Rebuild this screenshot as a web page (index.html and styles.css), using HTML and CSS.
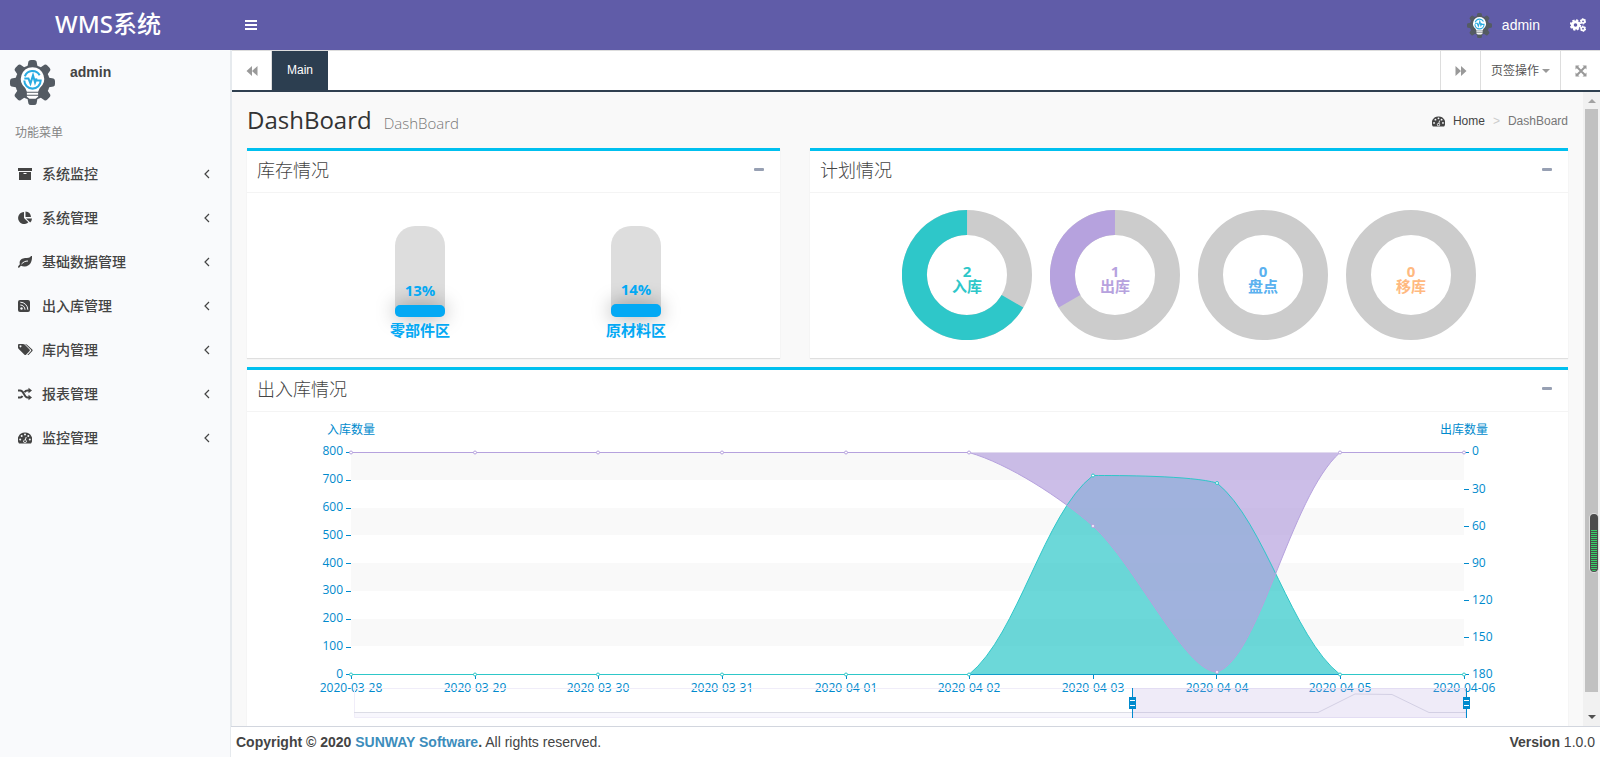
FILE: index.html
```html
<!DOCTYPE html>
<html lang="zh-CN">
<head>
	<meta charset="UTF-8">
	<title>WMS系统</title>
	<meta name="viewport" content="width=device-width"/>
	<link rel="stylesheet" href="styles.css">
</head>
<body>
	<!--图标库-->
	<svg class="sprite" aria-hidden="true">
		<symbol id="logo" viewBox="0 0 44 44">
			<g fill="#545b63">
				<circle cx="22" cy="22" r="17"/>
				<g id="teeth">
					<path d="M17 7L18 1.500Q18.500 0 20.500 0H23.500Q25.500 0 26 1.500L27 7ZM17 37L18 42.500Q18.500 44 20.500 44H23.500Q25.500 44 26 42.500L27 37Z"/>
					<path d="M7 17L1.500 18Q0 18.500 0 20.500V23.500Q0 25.500 1.500 26L7 27ZM37 17L42.500 18Q44 18.500 44 20.500V23.500Q44 25.500 42.500 26L37 27Z"/>
				</g>
				<use href="#teeth" transform="rotate(45 22 22)"/>
			</g>
			<path fill="#fff" d="M22 7A11.500 11.500 0 0 1 29 27.500L27.500 31V36L25 38H19L16.500 36V31L15 27.500A11.500 11.500 0 0 1 22 7Z"/>
			<path stroke="#545b63" d="M16 31.500H28M16 34.500H28"/>
			<path fill="none" stroke="#29abe2" stroke-width="2" d="M29 15A8 8 0 0 0 14.500 16M14 20A8 8 0 0 0 30 20H26M14 18H18L20 23L22.500 15L24.500 22L26 18"/>
		</symbol>
		<symbol id="i-archive" viewBox="0 0 14 14">
			<path fill-rule="evenodd" d="M0 1H14V4H0ZM1 5H13V13H1ZM5.500 6V7H8.500V6Z"/>
		</symbol>
		<symbol id="i-pie" viewBox="0 0 14 14">
			<path d="M6 1V7L10.300 11.300A6 6 0 1 1 6 1ZM7.500 0.500A6 6 0 0 1 13 6H7.500ZM8 7.500H14A6 6 0 0 1 12.200 11.500Z"/>
		</symbol>
		<symbol id="i-leaf" viewBox="0 0 14 14">
			<path d="M14 1C14.300 6 12.500 11 7 11.500C5.500 11.700 4 11.300 3 10.800C2 11.500 1.700 12.800 .8 12.800C.3 12.800 0 12.300 0 11.900C0 11 1.500 10 1.900 9.300C.6 5.500 4 3.200 7 3C9.500 2.900 12 3 13 1Z"/>
			<path class="cut" d="M3.500 9C5.500 7 7 6 10 6"/>
		</symbol>
		<symbol id="i-rss" viewBox="0 0 12 14">
			<rect x="0" y="1" width="12" height="12" rx="2"/>
			<circle class="hole" cx="3.500" cy="9.500" r="1.200"/>
			<path class="cut" d="M2.300 6A4.700 4.700 0 0 1 7 10.700M2.300 3.200A7.500 7.500 0 0 1 9.800 10.700"/>
		</symbol>
		<symbol id="i-tags" viewBox="0 0 15 14">
			<path fill-rule="evenodd" d="M0 2Q0 1 1 1H5Q6 1 6.600 1.600L11.600 6.600Q12.200 7.300 11.600 8L8 11.700Q7.300 12.300 6.500 11.700L.7 6Q0 5.400 0 4.800ZM2.500 2.300A1 1 0 1 0 2.510 2.300Z"/>
			<path d="M7 1Q8.200 1 9 1.700L14.300 6.600Q15 7.300 14.400 8L10.500 11.900Q10 12.300 9.300 11.900L13 8Q13.500 7.300 13 6.700Z"/>
		</symbol>
		<symbol id="i-random" viewBox="0 0 14 14">
			<path class="line" d="M0 3.500H2.200C6 3.500 6 10.500 9.500 10.500H11M0 10.500H2.200C3.200 10.500 4 9.800 4.500 9M6.500 5.200C7.300 4 8 3.500 9.500 3.500H11"/>
			<path d="M10.500 .8L14 3.500L10.500 6.200ZM10.500 7.800L14 10.500L10.500 13.200Z"/>
		</symbol>
		<symbol id="i-dash" viewBox="0 0 14 14">
			<path d="M7 1.500A7 7 0 0 1 13 12.500H1A7 7 0 0 1 7 1.500Z"/>
			<g class="hole">
				<circle cx="2.200" cy="8.500" r="1"/><circle cx="3.700" cy="5" r="1"/><circle cx="7" cy="3.600" r="1"/>
				<circle cx="10.300" cy="5" r="1"/><circle cx="11.800" cy="8.500" r="1"/><circle cx="7" cy="10.300" r="1.700"/>
			</g>
			<path class="cut" d="M7 10L8.200 6"/>
			<circle cx="7" cy="10.300" r="1"/>
		</symbol>
		<symbol id="i-cogs" viewBox="0 0 16 14">
			<circle class="ring" cx="5.500" cy="7" r="3.200"/>
			<circle class="teeth" cx="5.500" cy="7" r="4.800"/>
			<circle class="ring small" cx="13" cy="3.300" r="1.700"/>
			<circle class="teeth small" cx="13" cy="3.300" r="2.500"/>
			<circle class="ring small" cx="13" cy="10.700" r="1.700"/>
			<circle class="teeth small" cx="13" cy="10.700" r="2.500"/>
		</symbol>
		<symbol id="i-bars" viewBox="0 0 12 12">
			<path d="M0 1H12V3H0ZM0 5H12V7H0ZM0 9H12V11H0Z"/>
		</symbol>
		<symbol id="i-back" viewBox="0 0 12 12">
			<path d="M6 1V11L.5 6ZM11.500 1V11L6 6Z"/>
		</symbol>
		<symbol id="i-next" viewBox="0 0 12 12">
			<path d="M.5 1V11L6 6ZM6 1V11L11.500 6Z"/>
		</symbol>
		<symbol id="i-expand" viewBox="0 0 12 12">
			<path d="M.5 .5H4.500L.5 4.500ZM7.500 .5H11.500V4.500ZM11.500 7.500V11.500H7.500ZM4.500 11.500H.5V7.500Z"/>
			<path class="line" d="M2 2L10 10M10 2L2 10"/>
		</symbol>
		<symbol id="i-left" viewBox="0 0 6 10">
			<path fill="none" stroke="currentColor" stroke-width="1.200" d="M5 1L1 5L5 9"/>
		</symbol>
	</svg>

	<header class="main-header">
		<a class="logo" href="#">WMS系统</a>
		<nav class="navbar">
			<button class="toggle" aria-label="菜单"><svg width="12" height="12"><use href="#i-bars"/></svg></button>
			<a class="user" href="#"><svg width="25" height="25"><use href="#logo"/></svg>admin</a>
			<button class="setting" aria-label="设置"><svg width="16" height="14"><use href="#i-cogs"/></svg></button>
		</nav>
	</header>

	<div class="wrapper">
		<!--左侧菜单-->
		<aside class="sidebar">
			<div class="user-panel">
				<svg width="45" height="45"><use href="#logo"/></svg>
				<strong>admin</strong>
			</div>
			<div class="menu-title">功能菜单</div>
			<ul class="menu">
				<li><a href="#"><svg class="icon"><use href="#i-archive"/></svg><span>系统监控</span><svg class="arrow"><use href="#i-left"/></svg></a></li>
				<li><a href="#"><svg class="icon"><use href="#i-pie"/></svg><span>系统管理</span><svg class="arrow"><use href="#i-left"/></svg></a></li>
				<li><a href="#"><svg class="icon"><use href="#i-leaf"/></svg><span>基础数据管理</span><svg class="arrow"><use href="#i-left"/></svg></a></li>
				<li><a href="#"><svg class="icon rss"><use href="#i-rss"/></svg><span>出入库管理</span><svg class="arrow"><use href="#i-left"/></svg></a></li>
				<li><a href="#"><svg class="icon tags"><use href="#i-tags"/></svg><span>库内管理</span><svg class="arrow"><use href="#i-left"/></svg></a></li>
				<li><a href="#"><svg class="icon"><use href="#i-random"/></svg><span>报表管理</span><svg class="arrow"><use href="#i-left"/></svg></a></li>
				<li><a href="#"><svg class="icon"><use href="#i-dash"/></svg><span>监控管理</span><svg class="arrow"><use href="#i-left"/></svg></a></li>
			</ul>
		</aside>

		<div class="main">
			<!--页签-->
			<div class="tabs">
				<button class="tab-btn first" aria-label="向左"><svg width="12" height="12"><use href="#i-back"/></svg></button>
				<a class="tab active" href="#">Main</a>
				<button class="tab-btn push" aria-label="向右"><svg width="12" height="12"><use href="#i-next"/></svg></button>
				<button class="tab-btn wide">页签操作<i class="caret"></i></button>
				<button class="tab-btn" aria-label="全屏"><svg width="12" height="12"><use href="#i-expand"/></svg></button>
			</div>

			<div class="frame">
				<div class="content">
					<div class="content-header">
						<h1>DashBoard<small>DashBoard</small></h1>
						<nav class="breadcrumb">
							<svg width="13" height="13"><use href="#i-dash"/></svg>
							<a href="#">Home</a><i>&gt;</i><span>DashBoard</span>
						</nav>
					</div>

					<div class="row">
						<section class="box">
							<div class="box-header"><h3>库存情况</h3><button aria-label="折叠"></button></div>
							<div class="box-body tubes">
								<div class="tube">
									<div class="tube-bg"><span>13%</span><div class="tube-fill" style="height:13%"></div></div>
									<span>零部件区</span>
								</div>
								<div class="tube">
									<div class="tube-bg"><span>14%</span><div class="tube-fill" style="height:14%"></div></div>
									<span>原材料区</span>
								</div>
							</div>
						</section>
						<section class="box">
							<div class="box-header"><h3>计划情况</h3><button aria-label="折叠"></button></div>
							<div class="box-body rings">
								<svg class="donut c1" viewBox="0 0 130 130">
									<circle cx="65" cy="65" r="52.500"/>
									<circle class="part" cx="65" cy="65" r="52.500" pathLength="360" stroke-dasharray="240 120" transform="rotate(30 65 65)"/>
									<text y="67"><tspan x="65">2</tspan><tspan x="65" dy="15">入库</tspan></text>
								</svg>
								<svg class="donut c2" viewBox="0 0 130 130">
									<circle cx="65" cy="65" r="52.500"/>
									<circle class="part" cx="65" cy="65" r="52.500" pathLength="360" stroke-dasharray="120 240" transform="rotate(150 65 65)"/>
									<text y="67"><tspan x="65">1</tspan><tspan x="65" dy="15">出库</tspan></text>
								</svg>
								<svg class="donut c3" viewBox="0 0 130 130">
									<circle cx="65" cy="65" r="52.500"/>
									<text y="67"><tspan x="65">0</tspan><tspan x="65" dy="15">盘点</tspan></text>
								</svg>
								<svg class="donut c4" viewBox="0 0 130 130">
									<circle cx="65" cy="65" r="52.500"/>
									<text y="67"><tspan x="65">0</tspan><tspan x="65" dy="15">移库</tspan></text>
								</svg>
							</div>
						</section>
					</div>

					<section class="box">
						<div class="box-header"><h3>出入库情况</h3><button aria-label="折叠"></button></div>
						<!--出入库曲线-->
						<svg class="chart" viewBox="0 0 1321 340">
							<path fill="#f9f9f9" d="M104 40H1217V68H104ZM104 96H1217V123H104ZM104 151H1217V179H104ZM104 207H1217V234H104Z"/>
							<g class="mid">
								<text x="104" y="22">入库数量</text>
								<text x="1217" y="22">出库数量</text>
							</g>
							<g class="end">
								<text x="96" y="43">800</text><text x="96" y="71">700</text><text x="96" y="99">600</text>
								<text x="96" y="127">500</text><text x="96" y="155">400</text><text x="96" y="182">300</text>
								<text x="96" y="210">200</text><text x="96" y="238">100</text><text x="96" y="266">0</text>
							</g>
							<g>
								<text x="1225" y="43">0</text><text x="1225" y="81">30</text><text x="1225" y="118">60</text>
								<text x="1225" y="155">90</text><text x="1225" y="192">120</text><text x="1225" y="229">150</text>
								<text x="1225" y="266">180</text>
							</g>
							<g class="mid">
								<text x="104" y="280">2020-03-28</text><text x="228" y="280">2020-03-29</text>
								<text x="351" y="280">2020-03-30</text><text x="475" y="280">2020-03-31</text>
								<text x="599" y="280">2020-04-01</text><text x="722" y="280">2020-04-02</text>
								<text x="846" y="280">2020-04-03</text><text x="970" y="280">2020-04-04</text>
								<text x="1093" y="280">2020-04-05</text><text x="1217" y="280">2020-04-06</text>
							</g>
							<path class="axis" d="M99 40.500h5M99 68.500h5M99 96.500h5M99 123.500h5M99 151.500h5M99 179.500h5M99 207.500h5M99 235.500h5M99 262.500H1222M1217 40.500h5M1217 77.500h5M1217 114.500h5M1217 151.500h5M1217 188.500h5M1217 225.500h5M104.500 262v5M228.500 262v5M351.500 262v5M475.500 262v5M599.500 262v5M722.500 262v5M846.500 262v5M969.500 262v5M1093.500 262v5M1217.500 262v5"/>
							<path fill="#2ec7c9" opacity=".7" d="M722 262.500C771 223 797 101 846 63.500C872 63.500 944 63.500 970 71C1018 110 1045 225 1093 262.500Z"/>
							<path fill="#b6a2de" opacity=".7" d="M722 40.500C762 52 814 86 846 114C888 152 938 260 970 260C1012 247 1043 85 1093 40.500Z"/>
							<path class="s1" d="M104 262.500H722C771 223 797 101 846 63.500C872 63.500 944 63.500 970 71C1018 110 1045 225 1093 262.500H1217"/>
							<path class="s2" d="M104 40.500H722C762 52 814 86 846 114C888 152 938 260 970 260C1012 247 1043 85 1093 40.500H1217"/>
							<g class="dot1">
								<circle cx="104" cy="262.500" r="1.500"/><circle cx="228" cy="262.500" r="1.500"/><circle cx="351" cy="262.500" r="1.500"/>
								<circle cx="475" cy="262.500" r="1.500"/><circle cx="599" cy="262.500" r="1.500"/><circle cx="722" cy="262.500" r="1.500"/>
								<circle cx="846" cy="63.500" r="1.500"/><circle cx="970" cy="71" r="1.500"/><circle cx="1093" cy="262.500" r="1.500"/>
								<circle cx="1217" cy="262.500" r="1.500"/>
							</g>
							<g class="dot2">
								<circle cx="104" cy="40.500" r="1.500"/><circle cx="228" cy="40.500" r="1.500"/><circle cx="351" cy="40.500" r="1.500"/>
								<circle cx="475" cy="40.500" r="1.500"/><circle cx="599" cy="40.500" r="1.500"/><circle cx="722" cy="40.500" r="1.500"/>
								<circle cx="846" cy="114" r="1.500"/><circle cx="970" cy="260" r="1.500"/><circle cx="1093" cy="40.500" r="1.500"/>
								<circle cx="1217" cy="40.500" r="1.500"/>
							</g>
							<!--缩放条-->
							<path fill="#f8f7fd" d="M107 300H885V305H107Z"/>
							<path fill="none" stroke="#f0edf9" d="M107.500 276.500H1219V305.500H107.500Z"/>
							<path fill="none" stroke="#dcdde6" d="M107 300.500H1071L1108 282L1145 282.500L1182 300.500H1219"/>
							<path fill="#b6a2de" opacity=".22" d="M885 276H1219V306H885Z"/>
							<path fill="#008acd" d="M885 276h1v30h-1ZM882 285h7v12h-7ZM1219 276h1v30h-1ZM1216 285h7v12h-7Z"/>
							<path stroke="#fff" d="M883 288.500h5M883 293.500h5M1217 288.500h5M1217 293.500h5"/>
						</svg>
					</section>
				</div>
				<!--滚动条-->
				<div class="scrollbar">
					<i class="up"></i>
					<div class="thumb"></div>
					<i class="down"></i>
				</div>
				<div class="gauge"></div>
			</div>

			<footer class="footer">
				<div><strong>Copyright © 2020 <a href="#">SUNWAY Software</a>.</strong> All rights reserved.</div>
				<div><b>Version</b> 1.0.0</div>
			</footer>
		</div>
	</div>
</body>
</html>
```
FILE: styles.css
```css
*{
	box-sizing:border-box;
}
body{
	margin:0;
	height:100vh;
	display:flex;
	flex-direction:column;
	overflow:hidden;
	font:14px/20px "Liberation Sans","Noto Sans CJK SC",sans-serif;
	color:#333;
	background:#f9fafc;
}
a{
	color:inherit;
	text-decoration:none;
}
button{
	border:0;
	padding:0;
	background:none;
	color:inherit;
	font:inherit;
}
i{
	font-style:normal;
}
svg{
	fill:currentColor;
	flex:none;
}
.sprite{
	display:none;
}
/*图标*/
.hole{
	fill:#f9fafc;
}
.cut{
	fill:none;
	stroke:#f9fafc;
}
.line{
	fill:none;
	stroke:currentColor;
	stroke-width:2;
}
.ring{
	fill:none;
	stroke:currentColor;
	stroke-width:2.8;
}
.teeth{
	fill:none;
	stroke:currentColor;
	stroke-width:1.8;
	stroke-dasharray:2.2 1.57;
}
.ring.small{
	stroke-width:1.6;
}
.teeth.small{
	stroke-width:1.2;
	stroke-dasharray:1.5 1.1;
}
/*顶部*/
.main-header{
	display:flex;
	height:50px;
	flex:none;
	background:#605ca8;
	color:#fff;
}
.logo{
	width:230px;
	padding-right:14px;
	line-height:48px;
	text-align:center;
	font-size:24px;
	font-weight:500;
	font-family:"Noto Sans","Noto Sans CJK SC",sans-serif;
}
.navbar{
	flex:1;
	display:flex;
	align-items:center;
	padding:0 14px 0 15px;
}
.toggle{
	display:flex;
}
.user{
	display:flex;
	align-items:center;
	gap:10px;
	margin-left:auto;
}
.setting{
	display:flex;
	margin-left:30px;
}
.wrapper{
	display:flex;
	flex:1;
	min-height:0;
}
/*左侧*/
.sidebar{
	width:232px;
	flex:none;
	border-right:2px solid #e6eaee;
	color:#444;
}
.user-panel{
	display:flex;
	gap:15px;
	padding:10px;
}
.user-panel strong{
	padding-top:2px;
}
.menu-title{
	padding:8px 15px 9px;
	font-size:12px;
	color:#848484;
}
.menu{
	margin:0;
	padding:0;
	list-style:none;
}
.menu a{
	display:flex;
	align-items:center;
	height:44px;
	padding:0 20px 0 18px;
	font-weight:500;
}
.menu .icon{
	width:14px;
	height:14px;
	margin-right:10px;
}
.menu .rss{
	width:12px;
	margin-right:12px;
}
.menu .tags{
	width:15px;
	margin-right:9px;
}
.menu .arrow{
	width:6px;
	height:10px;
	margin-left:auto;
}
.main{
	flex:1;
	min-width:0;
	display:flex;
	flex-direction:column;
}
/*页签*/
.tabs{
	display:flex;
	height:42px;
	flex:none;
	border-top:1px solid #ddd;
	border-bottom:2px solid #2f4050;
	background:#fff;
	font-size:12px;
}
.tab-btn{
	width:40px;
	display:flex;
	align-items:center;
	justify-content:center;
	border-left:1px solid #ddd;
	color:#999;
}
.tab-btn.first{
	border-left:0;
	border-right:1px solid #ddd;
}
.tab-btn.push{
	margin-left:auto;
}
.tab-btn.wide{
	width:80px;
	color:#555;
}
.caret{
	margin-left:3px;
	border:4px solid transparent;
	border-top-color:#999;
	border-bottom:0;
}
.tab{
	padding:0 15px;
	line-height:38px;
}
.tab.active{
	background:#2c3e50;
	color:#fff;
}
/*内容*/
.frame{
	position:relative;
	flex:1;
	min-height:0;
	display:flex;
	background:#f9f9f9;
}
.content{
	flex:1;
	min-width:0;
	overflow:hidden;
	padding:0 15px;
}
.content-header{
	display:flex;
	justify-content:space-between;
	align-items:center;
	height:56px;
	padding-top:2px;
}
h1{
	margin:0;
	font:24px/32px "Open Sans",sans-serif;
}
h1 small{
	margin-left:12px;
	font-size:15px;
	font-weight:300;
	color:#777;
}
.breadcrumb{
	display:flex;
	align-items:center;
	font-size:12px;
	color:#777;
}
.breadcrumb svg,
.breadcrumb a{
	color:#444;
}
.breadcrumb a{
	margin-left:8px;
}
.breadcrumb i{
	margin:0 8px;
	color:#ccc;
}
.row{
	display:grid;
	grid-template-columns:533fr 758fr;
	gap:30px;
}
.box{
	margin-bottom:9px;
	border-top:3px solid #00c0ef;
	background:#fff;
	box-shadow:0 1px 1px rgba(0,0,0,.1);
}
.box-header{
	display:flex;
	justify-content:space-between;
	align-items:center;
	height:42px;
	padding:0 16px 2px 10px;
	border-bottom:1px solid #f4f4f4;
}
.box-header h3{
	margin:0;
	font-size:18px;
	font-weight:300;
	color:#444;
}
.box-header button{
	width:10px;
	height:3px;
	margin-bottom:2px;
	border-radius:1px;
	background:#97a0b3;
}
.box-body{
	height:165px;
}
/*库存*/
.tubes{
	display:grid;
	grid-template-columns:1fr 1fr;
	padding:33px 36px 0 65px;
}
.tube{
	display:flex;
	flex-direction:column;
	align-items:center;
	gap:3px;
	color:#03a9f4;
	font:bold 15px/20px "Open Sans","Noto Sans CJK SC",sans-serif;
}
.tube-bg{
	display:flex;
	flex-direction:column;
	justify-content:flex-end;
	width:50px;
	height:91px;
	border-radius:20px 20px 5px 5px;
	background:#ddd;
	text-align:center;
}
.tube-bg span{
	position:relative;
	z-index:1;
	padding-bottom:5px;
}
.tube-fill{
	border-radius:5px;
	background:#03a9f4;
	box-shadow:0 0 20px rgba(0,0,0,.4);
}
/*计划*/
.rings{
	display:flex;
	justify-content:center;
	align-items:center;
	gap:18px;
	padding-bottom:2px;
}
.donut{
	width:130px;
	font:bold 15px "Open Sans","Noto Sans CJK SC",sans-serif;
	text-anchor:middle;
}
.donut circle{
	fill:none;
	stroke:#ccc;
	stroke-width:25;
}
.donut .part{
	stroke:currentColor;
}
.c1{
	color:#2ec7c9;
}
.c2{
	color:#b6a2de;
}
.c3{
	color:#5ab1ef;
}
.c4{
	color:#ffb980;
}
/*曲线*/
.chart{
	display:block;
	width:100%;
	color:#008acd;
	font:12px "Open Sans","Noto Sans CJK SC",sans-serif;
}
.mid{
	text-anchor:middle;
}
.end{
	text-anchor:end;
}
.axis{
	fill:none;
	stroke:#008acd;
}
.s1,
.dot1{
	fill:none;
	stroke:#2ec7c9;
}
.s2,
.dot2{
	fill:none;
	stroke:#b6a2de;
}
.dot1,
.dot2{
	fill:#fff;
}
/*滚动条*/
.scrollbar{
	width:17px;
	display:flex;
	flex-direction:column;
	align-items:center;
	background:#f1f1f1;
}
.thumb{
	width:13px;
	flex:1;
	margin-bottom:17px;
	background:#c1c1c1;
}
.up,
.down{
	height:4px;
	border:4px solid transparent;
}
.up{
	margin:7px 0 6px;
	border-top:0;
	border-bottom-color:#a3a3a3;
}
.down{
	margin:6px 0 7px;
	border-bottom:0;
	border-top-color:#505050;
}
.gauge{
	position:absolute;
	right:2px;
	top:422px;
	width:8px;
	height:58px;
	border:1px solid #4a4a4a;
	border-top-width:16px;
	border-radius:4px;
	background:repeating-linear-gradient(#35d068 0 1px,#4a4a4a 1px 2px);
	box-shadow:0 0 0 1px #ddd;
}
/*底部*/
.footer{
	display:flex;
	justify-content:space-between;
	align-items:center;
	height:31px;
	flex:none;
	margin-left:-1px;
	padding:0 5px;
	border-top:1px solid #d2d6de;
	background:#fff;
	color:#444;
}
.footer a{
	color:#3c8dbc;
}
```
